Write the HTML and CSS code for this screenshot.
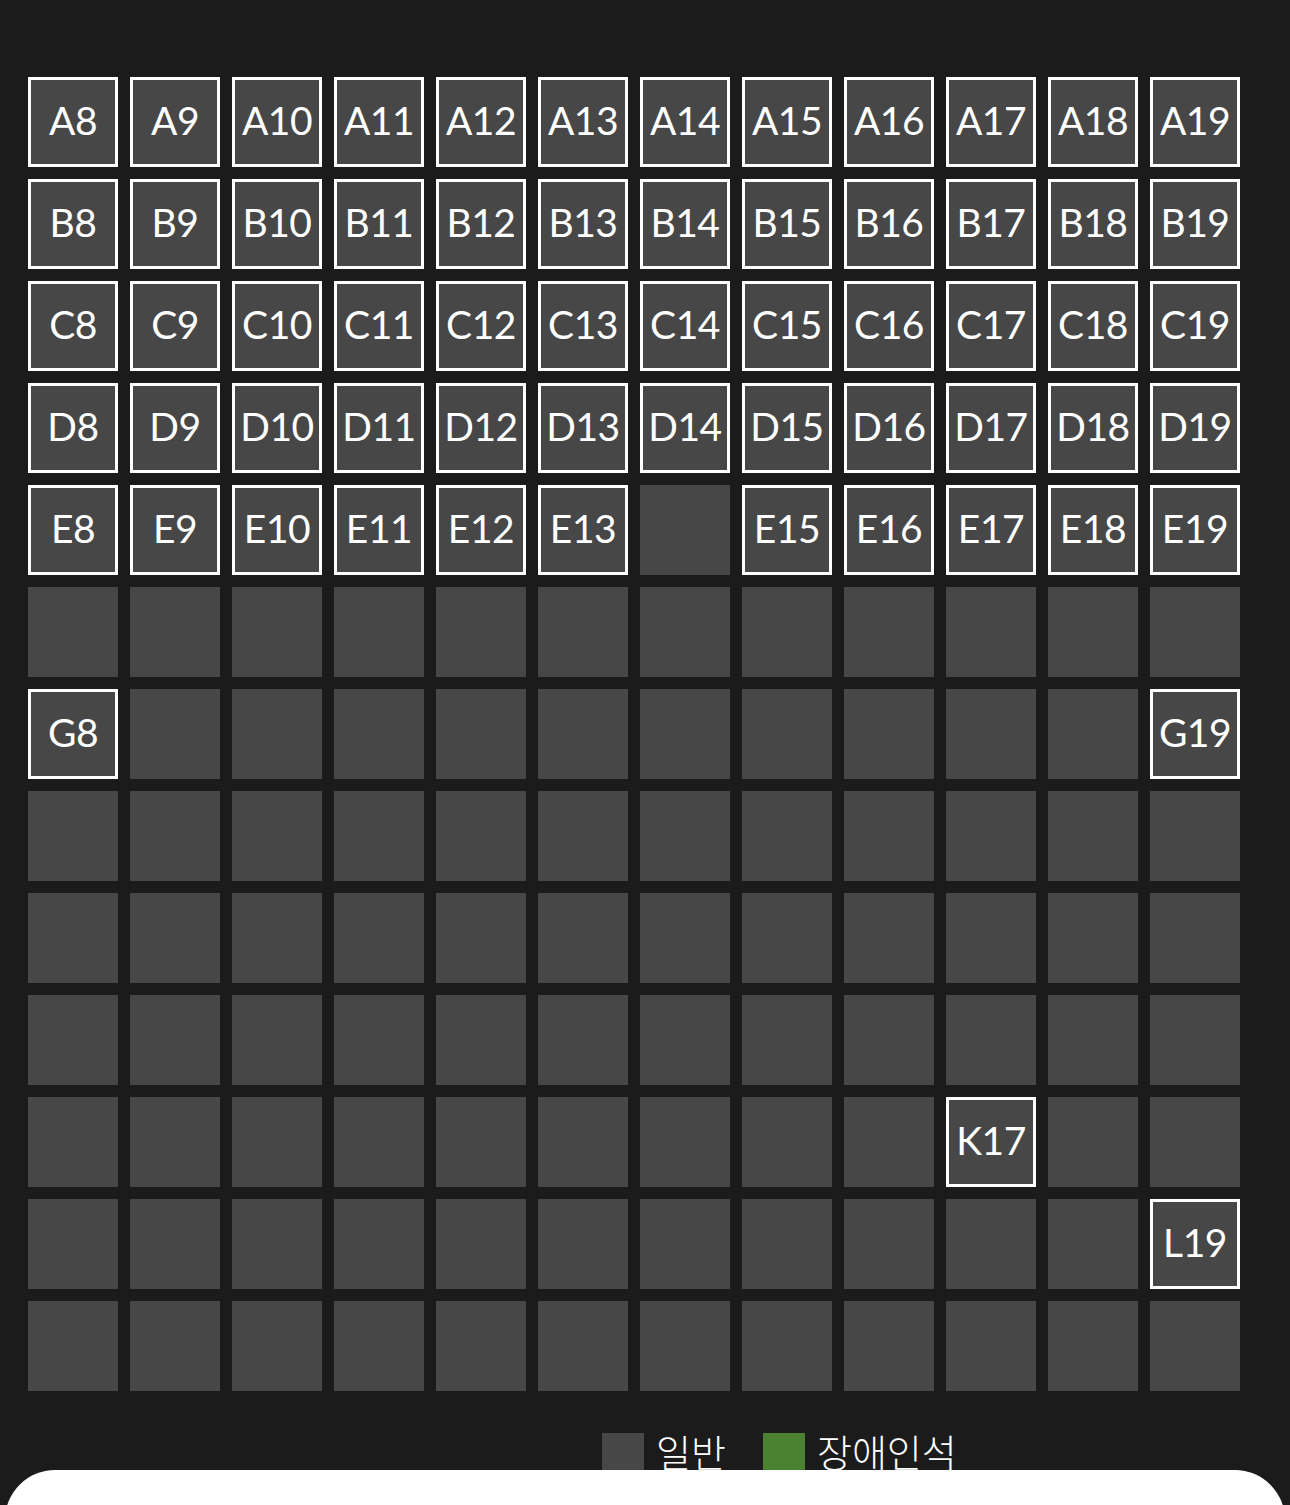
FILE: index.html
```html
<!DOCTYPE html>
<html lang="ko">
<head>
    <meta charset="UTF-8">
    <meta name="viewport" content="width=device-width, initial-scale=1.0">
    <title>좌석 선택</title>
    <link rel="stylesheet" href="styles.css">
</head>
<body>

    <div class="seat-map">
        <div class="seat-grid" id="seat-grid"></div>

        <div class="legend">
            <div class="legend-item"><span class="swatch swatch-normal"></span>일반</div>
            <div class="legend-item"><span class="swatch swatch-access"></span>장애인석</div>
        </div>
    </div>

    <div class="bottom-sheet"></div>

    <script>
        // rows A..M, columns 8..19
        var rows = "ABCDEFGHIJKLM".split("");
        var open = {
            A: "all", B: "all", C: "all", D: "all",
            E: [8, 9, 10, 11, 12, 13, 15, 16, 17, 18, 19],
            G: [8, 19],
            K: [17],
            L: [19]
        };
        var grid = document.getElementById("seat-grid");

        rows.forEach(function (row) {
            for (let col = 8; col <= 19; col++) {
                let seat = document.createElement("div");
                seat.className = "seat";
                let list = open[row];
                if (list && (list === "all" || list.indexOf(col) !== -1)) {
                    seat.className += " available";
                    seat.textContent = row + col;
                }
                grid.appendChild(seat);
            }
        });
    </script>

</body>
</html>
```

FILE: styles.css
```css
/* Page */
body {
    margin: 0;
    padding: 0;
    background: #1b1b1b;
    font-family: Lato, "Noto Sans CJK KR", sans-serif;
    color: #fff;
    height: 1505px;
    overflow: hidden;
}

/* Seat Map */
.seat-map {
    padding: 77px 0 0 28px;
}

.seat-grid {
    display: grid;
    grid-template-columns: repeat(12, 90px);
    grid-auto-rows: 90px;
    gap: 12px;
}

.seat {
    background: #474747;
    box-sizing: border-box;
    display: flex;
    align-items: center;
    justify-content: center;
    padding-bottom: 5px;
    font-size: 39px;
    letter-spacing: -0.5px;
}

.seat.available {
    border: 3px solid #fff;
}

/* Legend */
.legend {
    display: flex;
    gap: 37px;
    margin-top: 42px;
    padding-left: 574px;
    font-family: "Noto Sans CJK KR", sans-serif;
    font-weight: 300;
    font-size: 38px;
    line-height: 36px;
}

.legend-item {
    display: flex;
    align-items: flex-start;
    gap: 12px;
}

.swatch {
    display: inline-block;
    width: 42px;
    height: 42px;
}

.swatch-normal {
    background: #474747;
}

.swatch-access {
    background: #4a8232;
}

/* Bottom Sheet */
.bottom-sheet {
    position: fixed;
    left: 5px;
    right: 5px;
    top: 1470px;
    height: 120px;
    background: #fff;
    border-radius: 50px 50px 0 0;
}
```
